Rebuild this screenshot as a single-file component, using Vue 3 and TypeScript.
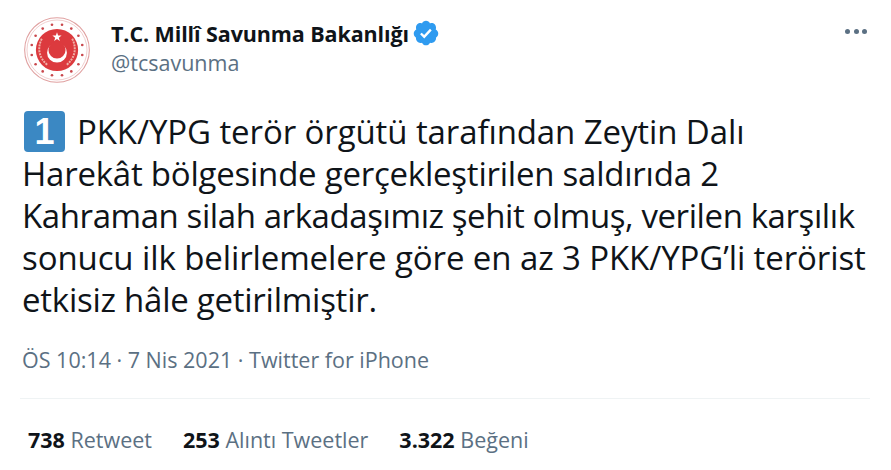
<script setup lang="ts">
const stats = [
  { value: '738', label: 'Retweet' },
  { value: '253', label: 'Alıntı Tweetler' },
  { value: '3.322', label: 'Beğeni' },
]
// tracking differs per line since the original face isn't available
const lines = [
  { text: 'PKK/YPG terör örgütü tarafından Zeytin Dalı', spacing: -0.1 },
  { text: 'Harekât bölgesinde gerçekleştirilen saldırıda 2', spacing: -0.23 },
  { text: 'Kahraman silah arkadaşımız şehit olmuş, verilen karşılık', spacing: -0.41 },
  { text: 'sonucu ilk belirlemelere göre en az 3 PKK/YPG’li terörist', spacing: -0.1 },
  { text: 'etkisiz hâle getirilmiştir.', spacing: -0.25 },
]
const stars = Array.from({ length: 16 }, (_, i) => {
  const a = (i / 16) * Math.PI * 2 + Math.PI / 16
  return { x: 50 + Math.cos(a) * 39, y: 50 + Math.sin(a) * 39 }
})
</script>

<template>
  <main class="tweet">
    <header class="head">
      <svg class="avatar" viewBox="0 0 100 100" aria-hidden="true">
        <circle cx="50" cy="50" r="49" fill="#fff" stroke="#e0a0a0" stroke-width="1.6" />
        <circle cx="50" cy="50" r="45.5" fill="none" stroke="#e8b4b4" stroke-width="1" />
        <circle v-for="(s, i) in stars" :key="i" :cx="s.x" :cy="s.y" r="2" fill="#c9474c" />
        <circle cx="50" cy="50" r="32" fill="#dc3a3e" />
        <path d="M27 33c-7 13-5 29 9 40M73 33c7 13 5 29-9 40" fill="none" stroke="#f0b0a8" stroke-width="3" stroke-dasharray="3 1.500" />
        <circle cx="50" cy="54" r="15" fill="#fff" />
        <circle cx="50" cy="50" r="13" fill="#dc3a3e" />
        <path d="M50 23l1.700 5 5.300.1-4.200 3.200 1.500 5-4.300-3-4.300 3 1.500-5-4.200-3.200 5.300-.1z" fill="#fff" />
      </svg>
      <div class="who">
        <div class="name-row">
          <span class="name">T.C. Millî Savunma Bakanlığı</span>
          <svg class="badge" viewBox="0 0 24 24" aria-hidden="true">
            <path fill="#2f9bf0" d="M22.500 12.500c0-1.580-.875-2.950-2.148-3.600.154-.435.238-.905.238-1.400 0-2.210-1.710-3.998-3.818-3.998-.47 0-.92.084-1.336.25C14.818 2.415 13.510 1.500 12 1.500s-2.816.917-3.437 2.250c-.415-.165-.866-.25-1.336-.25-2.110 0-3.818 1.790-3.818 4 0 .494.083.964.237 1.400-1.272.65-2.147 2.018-2.147 3.600 0 1.495.782 2.798 1.942 3.486-.02.17-.032.34-.032.514 0 2.210 1.708 4 3.818 4 .47 0 .92-.086 1.335-.25.62 1.334 1.926 2.250 3.437 2.250 1.512 0 2.818-.916 3.437-2.250.415.163.865.248 1.336.248 2.110 0 3.818-1.790 3.818-4 0-.174-.012-.344-.033-.513 1.158-.687 1.943-1.990 1.943-3.484z" />
            <path fill="#fff" d="M10.523 16.700l-3.600-3.600 1.400-1.400 2.100 2.100 5-5.400 1.460 1.350z" />
          </svg>
        </div>
        <div class="handle">@tcsavunma</div>
      </div>
      <div class="more" aria-hidden="true"><i></i><i></i><i></i></div>
    </header>

    <p class="body">
      <span
        v-for="(line, i) in lines"
        :key="i"
        class="line"
        :style="{ letterSpacing: line.spacing + 'px' }"
      ><span v-if="i === 0" class="keycap">1</span>{{ line.text }}</span>
    </p>

    <div class="meta">ÖS 10:14 · 7 Nis 2021 · Twitter for iPhone</div>
    <div class="stats">
      <span v-for="s in stats" :key="s.label" class="stat"><strong>{{ s.value }}</strong> {{ s.label }}</span>
    </div>
  </main>
</template>

<style>
html, body { background: #fff; }
</style>

<style scoped>
.tweet { box-sizing: border-box; width: 891px; height: 470px; padding: 16px 0 0 22px; overflow: hidden; background: #fff; font-family: "Open Sans", "Noto Sans", sans-serif; color: #0f1419; }
.head { display: flex; align-items: flex-start; height: 68px; }
.avatar { width: 66px; height: 66px; flex: none; margin: 1px 0 0 2px; }
.who { margin-left: 21px; padding-top: 1px; }
.name-row { display: flex; align-items: center; height: 32px; }
.name { font-size: 21.5px; font-weight: 700; letter-spacing: -0.1px; }
.badge { width: 28px; height: 28px; margin-left: 3px; }
.handle { font-size: 21.5px; line-height: 28px; color: #5b7083; }
.more { display: flex; gap: 3.5px; margin-left: auto; margin-right: 24px; margin-top: 13px; }
.more i { width: 5px; height: 5px; border-radius: 50%; background: #5b7083; }
.body { margin: 27px 0 0; font-size: 33px; line-height: 42px; }
.line { display: block; height: 42px; white-space: nowrap; }
.keycap { display: inline-flex; align-items: center; justify-content: center; width: 41px; height: 41px; margin: 0 12px 0 2px; vertical-align: top; border-radius: 4px; background: #3b88c3; color: #fff; font-family: "Liberation Sans", Arial, sans-serif; font-size: 36px; font-weight: 700; line-height: 1; }
.meta { margin-top: 25px; font-size: 21.5px; line-height: 28px; color: #5b7083; }
.stats { display: flex; gap: 31px; margin: 24px 21px 0 -2px; padding: 27px 0 0 8px; border-top: 1px solid #eff3f4; font-size: 21.5px; line-height: 28px; color: #5b7083; }
.stats strong { color: #0f1419; font-weight: 700; }
</style>
